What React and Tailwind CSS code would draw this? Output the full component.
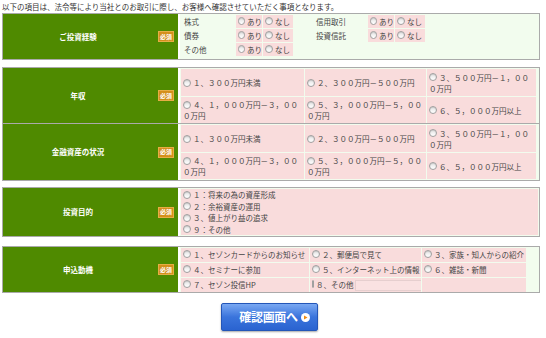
import React from "react";

const Radio = () => (
  <span className="inline-block align-middle w-[8px] h-[8px] rounded-full border border-[#a0a0a0] bg-gradient-to-b from-[#e4e4e4] to-white mr-[2px] relative -top-[1px] shadow-[inset_0_1px_1px_rgba(0,0,0,0.12)]"></span>
);

const Badge = () => (
  <span className="inline-flex items-center justify-center w-[14px] h-[9px] bg-[#d48f1a] text-white text-[6px] font-bold leading-none ring-1 ring-[#e6ad45] whitespace-nowrap">
    必須
  </span>
);

const Green = ({ label, className = "" }) => (
  <div className={"w-[175px] shrink-0 bg-[#4f8a00] flex items-center " + className}>
    <div className="flex-1 text-center text-white text-[7.5px] font-bold">{label}</div>
    <div className="w-[25px] flex items-center justify-start pl-[6px]">
      <Badge />
    </div>
  </div>
);

const Cell = ({ children, className = "" }) => (
  <div className={"bg-[#f9dcdc] flex items-center px-[2px] " + className}>
    <span className="leading-[11px]">{children}</span>
  </div>
);

const RangeGrid = () => {
  const opts = [
    "１、３００万円未満",
    "２、３００万円－５００万円",
    "３、５００万円－１，０００万円",
    "４、１，０００万円－３，０００万円",
    "５、３，０００万円－５，０００万円",
    "６、５，０００万円以上",
  ];
  return (
    <div className="flex-1 border-l-2 border-white bg-[#f2fcee] p-[1px] pr-[3px]">
      <div className="grid grid-cols-[123px_121px_1fr] grid-rows-[27px_26px] gap-px bg-[#f2fcee]">
        {opts.map((o) => (
          <Cell key={o}>
            <Radio />
            {o}
          </Cell>
        ))}
      </div>
    </div>
  );
};

const YesNo = () => (
  <>
    <div className="bg-[#f9dcdc] flex items-center pl-[2px] whitespace-nowrap">
      <Radio />
      あり
    </div>
    <div className="bg-[#f9dcdc] flex items-center pl-[2px] whitespace-nowrap">
      <Radio />
      なし
    </div>
  </>
);

const Cell5 = ({ children }) => (
  <div className="bg-[#f9dcdc] flex items-center pl-[2px] whitespace-nowrap overflow-hidden">
    {children}
  </div>
);

export default function App() {
  return (
    <div className="w-[546px] h-[338px] bg-white font-['Noto_Sans_CJK_JP',sans-serif] text-[#444] text-[7.5px] overflow-hidden px-[2px]">
      <div className="h-[13px] pt-[1px] leading-[11px] text-[#333]">
        以下の項目は、法令等により当社とのお取引に際し、お客様へ確認させていただく事項となります。
      </div>

      {/* Section 1 */}
      <div className="w-[538px] flex border border-[#aaa] bg-[#f2fcee] h-[47px]">
        <Green label="ご投資経験" />
        <div className="flex-1 border-l-2 border-white py-[1px] pl-[2px]">
          <div className="grid grid-cols-[53px_26px_30px_21px_51px_26px_30px] grid-rows-[13px_13px_13px] gap-x-px gap-y-px">
            <div className="flex items-center pl-[2px]">株式</div>
            <YesNo />
            <div></div>
            <div className="flex items-center">信用取引</div>
            <YesNo />
            <div className="flex items-center pl-[2px]">債券</div>
            <YesNo />
            <div></div>
            <div className="flex items-center">投資信託</div>
            <YesNo />
            <div className="flex items-center pl-[2px]">その他</div>
            <YesNo />
          </div>
        </div>
      </div>

      {/* Section 2 & 3 */}
      <div className="w-[538px] mt-[7px] border border-[#aaa] flex flex-col">
        <div className="flex h-[56px] border-b border-[#aaa]">
          <Green label="年収" />
          <RangeGrid />
        </div>
        <div className="flex h-[56px]">
          <Green label="金融資産の状況" />
          <RangeGrid />
        </div>
      </div>

      {/* Section 4 */}
      <div className="w-[538px] mt-[6px] border border-[#aaa] flex h-[50px]">
        <Green label="投資目的" />
        <div className="flex-1 border-l-2 border-white bg-[#f2fcee] p-[1px]">
          <div className="bg-[#f9dcdc] h-full px-[2px] flex flex-col justify-center">
            {["１：将来の為の資産形成", "２：余裕資産の運用", "３、値上がり益の追求", "９：その他"].map((t) => (
              <div key={t} className="leading-[11.5px]">
                <Radio />
                {t}
              </div>
            ))}
          </div>
        </div>
      </div>

      {/* Section 5 */}
      <div className="w-[538px] mt-[9px] border border-[#aaa] flex h-[47px]">
        <Green label="申込動機" />
        <div className="flex-1 border-l-2 border-white bg-[#f2fcee] p-[1px]">
          <div className="grid grid-cols-[128px_111px_104px] grid-rows-[14px_14px_14px] gap-px">
            <Cell5><Radio />１、セゾンカードからのお知らせ</Cell5>
            <Cell5><Radio />２、郵便局で見て</Cell5>
            <Cell5><Radio />３、家族・知人からの紹介</Cell5>
            <Cell5><Radio />４、セミナーに参加</Cell5>
            <Cell5><Radio />５、インターネット上の情報</Cell5>
            <Cell5><Radio />６、雑誌・新聞</Cell5>
            <Cell5><Radio />７、セゾン投信HP</Cell5>
            <Cell5>
              <Radio />
              <span>８、その他</span>
              <span className="inline-block shrink-0 w-[74px] h-[11px] border border-[#e6cfcf] bg-[#fae2e2] ml-[1px]"></span>
            </Cell5>
            <div className="bg-[#f9dcdc]"></div>
          </div>
        </div>
      </div>

      {/* Button */}
      <div className="mt-[10px] ml-[219px]">
        <button className="w-[97px] h-[28px] rounded-[2px] bg-gradient-to-b from-[#7aa8f2] via-[#3a74dc] to-[#2a63d0] border border-[#2456b8] shadow-[0_1px_2px_rgba(0,0,0,0.35)] flex items-center justify-center gap-[3px] pl-[10px]">
          <span className="text-white text-[12px] font-bold tracking-[-0.3px] leading-none">確認画面へ</span>
          <span className="w-[9px] h-[9px] rounded-full bg-white flex items-center justify-center">
            <svg width="5" height="5" viewBox="0 0 5 5">
              <path d="M1 0.5 L4.5 2.5 L1 4.5 Z" fill="#f08a10" />
            </svg>
          </span>
        </button>
      </div>
    </div>
  );
}
